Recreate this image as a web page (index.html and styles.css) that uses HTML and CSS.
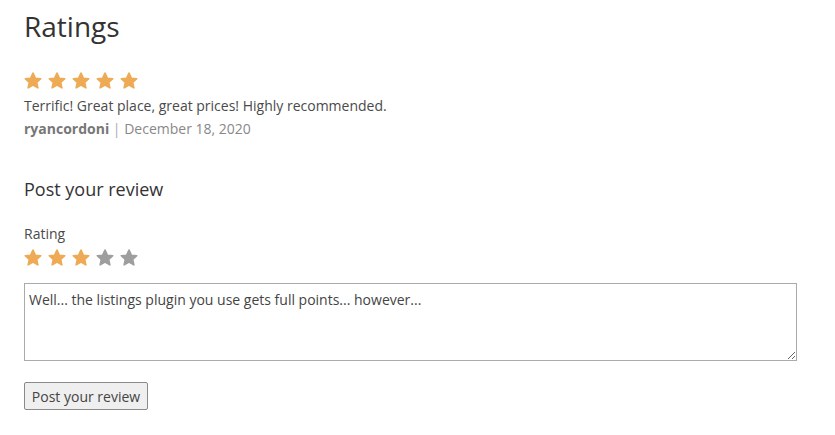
FILE: index.html
```html
<!DOCTYPE html>
<html lang="en">
<head>
<meta charset="utf-8">
<title>Ratings</title>
<link rel="stylesheet" href="styles.css">
</head>
<body>
<div class="page">
  <h1 class="title">Ratings</h1>

  <div class="review">
    <div class="stars">
      <svg class="star on" viewBox="0 0 20 20"><polygon points="10,1.2 12.6,6.9 18.6,7.5 14.1,11.6 15.4,17.6 10,14.5 4.6,17.6 5.9,11.6 1.4,7.5 7.4,6.9"/></svg>
      <svg class="star on" viewBox="0 0 20 20"><polygon points="10,1.2 12.6,6.9 18.6,7.5 14.1,11.6 15.4,17.6 10,14.5 4.6,17.6 5.9,11.6 1.4,7.5 7.4,6.9"/></svg>
      <svg class="star on" viewBox="0 0 20 20"><polygon points="10,1.2 12.6,6.9 18.6,7.5 14.1,11.6 15.4,17.6 10,14.5 4.6,17.6 5.9,11.6 1.4,7.5 7.4,6.9"/></svg>
      <svg class="star on" viewBox="0 0 20 20"><polygon points="10,1.2 12.6,6.9 18.6,7.5 14.1,11.6 15.4,17.6 10,14.5 4.6,17.6 5.9,11.6 1.4,7.5 7.4,6.9"/></svg>
      <svg class="star on" viewBox="0 0 20 20"><polygon points="10,1.2 12.6,6.9 18.6,7.5 14.1,11.6 15.4,17.6 10,14.5 4.6,17.6 5.9,11.6 1.4,7.5 7.4,6.9"/></svg>
    </div>
    <p class="review-text">Terrific! Great place, great prices! Highly recommended.</p>
    <p class="review-meta"><span class="author">ryancordoni</span> <span class="sep">|</span> December 18, 2020</p>
  </div>

  <h3 class="subtitle">Post your review</h3>

  <form class="review-form">
    <label class="label">Rating</label>
    <div class="stars form-stars">
      <svg class="star on" viewBox="0 0 20 20"><polygon points="10,1.2 12.6,6.9 18.6,7.5 14.1,11.6 15.4,17.6 10,14.5 4.6,17.6 5.9,11.6 1.4,7.5 7.4,6.9"/></svg>
      <svg class="star on" viewBox="0 0 20 20"><polygon points="10,1.2 12.6,6.9 18.6,7.5 14.1,11.6 15.4,17.6 10,14.5 4.6,17.6 5.9,11.6 1.4,7.5 7.4,6.9"/></svg>
      <svg class="star on" viewBox="0 0 20 20"><polygon points="10,1.2 12.6,6.9 18.6,7.5 14.1,11.6 15.4,17.6 10,14.5 4.6,17.6 5.9,11.6 1.4,7.5 7.4,6.9"/></svg>
      <svg class="star off" viewBox="0 0 20 20"><polygon points="10,1.2 12.6,6.9 18.6,7.5 14.1,11.6 15.4,17.6 10,14.5 4.6,17.6 5.9,11.6 1.4,7.5 7.4,6.9"/></svg>
      <svg class="star off" viewBox="0 0 20 20"><polygon points="10,1.2 12.6,6.9 18.6,7.5 14.1,11.6 15.4,17.6 10,14.5 4.6,17.6 5.9,11.6 1.4,7.5 7.4,6.9"/></svg>
    </div>
    <textarea class="comment">Well... the listings plugin you use gets full points... however...</textarea>
    <div class="actions">
      <button type="button" class="btn">Post your review</button>
    </div>
  </form>
</div>
</body>
</html>
```

FILE: styles.css
```css
html, body {
  margin: 0;
  padding: 0;
  background: #ffffff;
}

body {
  font-family: "Open Sans", "Liberation Sans", sans-serif;
  font-size: 14px;
  line-height: 20px;
  color: #4a4a4a;
}

.page {
  padding: 9px 38px 20px 24px;
}

.title {
  margin: 0;
  font-size: 28px;
  line-height: 34px;
  font-weight: 400;
  color: #333333;
}

.stars {
  display: flex;
  gap: 6px;
  height: 18px;
}

.review .stars {
  margin-top: 29px;
}

.star {
  width: 18px;
  height: 18px;
  display: block;
}

.star polygon {
  stroke-width: 1.8;
  stroke-linejoin: round;
}

.star.on polygon {
  fill: #eeaa55;
  stroke: #eeaa55;
}

.star.off polygon {
  fill: #9e9e9e;
  stroke: #9e9e9e;
}

.review-text {
  margin: 6px 0 0;
  color: #4a4a4a;
}

.review-meta {
  margin: 3px 0 0;
  color: #888888;
}

.author {
  font-weight: 700;
  color: #777777;
}

.sep {
  color: #aaaaaa;
}

.subtitle {
  margin: 38px 0 0;
  font-size: 18px;
  line-height: 24px;
  font-weight: 400;
  color: #333333;
}

.review-form {
  display: flex;
  flex-direction: column;
  align-items: flex-start;
  margin-top: 23px;
}

.label {
  display: block;
  color: #4a4a4a;
}

.form-stars {
  margin-top: 5px;
}

.comment {
  display: block;
  box-sizing: border-box;
  width: 773px;
  height: 78px;
  margin-top: 16px;
  padding: 6px 4px;
  border: 1px solid #aaaaaa;
  border-radius: 0;
  font-family: "Open Sans", "Liberation Sans", sans-serif;
  font-size: 14px;
  line-height: 20px;
  color: #444444;
  background: #ffffff;
}

.actions {
  margin-top: 21px;
}

.btn {
  box-sizing: border-box;
  width: 124px;
  height: 28px;
  padding: 1px 6px 0;
  border: 1px solid #8a8a8a;
  border-radius: 2px;
  background: #efefef;
  font-family: "Open Sans", "Liberation Sans", sans-serif;
  font-size: 14px;
  line-height: 20px;
  color: #444444;
}
```
